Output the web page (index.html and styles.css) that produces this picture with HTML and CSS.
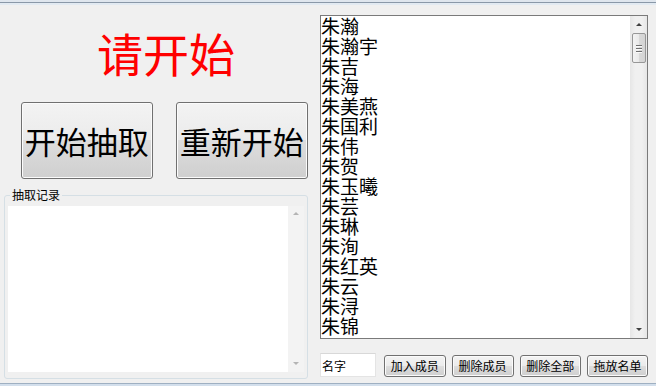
FILE: index.html
```html
<!DOCTYPE html>
<html lang="zh">
<head>
<meta charset="utf-8">
<title>抽取</title>
<link rel="stylesheet" href="styles.css">
</head>
<body>
<div class="topbar"></div>
<div class="main">
  <div class="left">
    <div class="title">请开始</div>
    <div class="btns">
      <button class="big">开始抽取</button>
      <button class="big">重新开始</button>
    </div>
    <fieldset class="group">
      <legend>抽取记录</legend>
      <div class="log">
        <div class="log-area"></div>
        <div class="vscroll off">
          <span class="arr up"></span>
          <span class="arr down"></span>
        </div>
      </div>
    </fieldset>
  </div>
  <div class="right">
    <div class="listbox">
      <ul class="items">
        <li>朱瀚</li>
        <li>朱瀚宇</li>
        <li>朱吉</li>
        <li>朱海</li>
        <li>朱美燕</li>
        <li>朱国利</li>
        <li>朱伟</li>
        <li>朱贺</li>
        <li>朱玉曦</li>
        <li>朱芸</li>
        <li>朱琳</li>
        <li>朱洵</li>
        <li>朱红英</li>
        <li>朱云</li>
        <li>朱浔</li>
        <li>朱锦</li>
      </ul>
      <div class="vscroll">
        <span class="arr up"></span>
        <span class="thumb"><i></i><i></i><i></i></span>
        <span class="track"></span>
        <span class="arr down"></span>
      </div>
    </div>
    <div class="controls">
      <input class="name" type="text" value="名字">
      <button class="small">加入成员</button>
      <button class="small">删除成员</button>
      <button class="small">删除全部</button>
      <button class="small">拖放名单</button>
    </div>
  </div>
</div>
<div class="bottombar"></div>
</body>
</html>
```
FILE: styles.css
```css
* { box-sizing: border-box; }
html, body {
  margin: 0;
  padding: 0;
}
body {
  width: 656px;
  height: 386px;
  overflow: hidden;
  background: #f0f0f0;
  font-family: "Noto Sans CJK SC", "Noto Sans", sans-serif;
  color: #000;
}
.topbar {
  height: 5px;
  background: linear-gradient(#dfe6ee 0 2px, #8a98a8 2px 3px, #e2eaf2 3px 5px);
}
.bottombar {
  height: 3px;
  background: linear-gradient(#9fb0c2 0 1px, #d3dfec 1px 3px);
}
.main {
  display: flex;
  height: 378px;
}
.left {
  width: 304px;
  margin-left: 4px;
  display: flex;
  flex-direction: column;
}
.title {
  margin-top: 24px;
  height: 46px;
  font-size: 46px;
  line-height: 46px;
  color: #f00;
  text-align: center;
  padding-left: 20px;
}
.btns {
  display: flex;
  gap: 23px;
  margin-top: 27px;
  padding-left: 17px;
}
button {
  font-family: "Noto Sans CJK SC", "Noto Sans", sans-serif;
  color: #000;
  padding: 0;
  border: 1px solid #707070;
  border-radius: 3px;
  background: linear-gradient(#f3f3f3 0%, #ebebeb 49%, #dddddd 50%, #cfcfcf 100%);
  box-shadow: inset 0 0 0 1px #fbfbfb;
}
.big {
  width: 133px;
  height: 77px;
  font-size: 31px;
  line-height: 1;
}
.big + .big { width: 134px; }
.group {
  margin: 9px 0 0 0;
  height: 191px;
  width: 304px;
  border: 1px solid #d5dfe5;
  border-radius: 3px;
  padding: 4px 3px 6px 3px;
}
.group legend {
  font-size: 12px;
  line-height: 14px;
  height: 14px;
  padding: 0 2px;
  margin-left: 2px;
}
.log {
  display: flex;
  height: 166px;
}
.log-area {
  flex: 1;
  background: #fff;
}
.vscroll {
  width: 17px;
  display: flex;
  flex-direction: column;
  align-items: center;
  background: linear-gradient(90deg, #e6e6e6, #f0f0f0 30%, #f0f0f0 70%, #e6e6e6);
}
.vscroll.off {
  width: 16px;
  justify-content: space-between;
  background: #f3f3f3;
  padding: 6px 0 7px;
}
.arr {
  width: 0;
  height: 0;
  border-left: 3px solid transparent;
  border-right: 3px solid transparent;
}
.arr.up { border-bottom: 3px solid #404040; }
.arr.down { border-top: 3px solid #404040; }
.off .arr.up { border-bottom-color: #b4b4b4; }
.off .arr.down { border-top-color: #b4b4b4; }
.right {
  margin-left: 12px;
  width: 328px;
  padding-top: 10px;
  display: flex;
  flex-direction: column;
}
.listbox {
  height: 324px;
  border: 1px solid #7a7a7a;
  background: #fff;
  display: flex;
}
.items {
  flex: 1;
  list-style: none;
  margin: 0;
  padding: 0;
  font-size: 19px;
  line-height: 20px;
  overflow: hidden;
}
.items li {
  height: 20px;
  white-space: nowrap;
}
.listbox .vscroll {
  padding: 0 1px;
}
.listbox .arr.up { margin-top: 7px; margin-bottom: 7px; }
.listbox .arr.down { margin-bottom: 7px; margin-top: 7px; }
.thumb {
  width: 14px;
  height: 30px;
  margin-left: 1px;
  border: 1px solid #979797;
  border-radius: 2px;
  background: linear-gradient(90deg, #f3f3f3, #e9e9e9 50%, #d9d9d9 51%, #d4d4d4);
  display: flex;
  flex-direction: column;
  align-items: center;
  justify-content: center;
  gap: 2px;
}
.thumb i {
  display: block;
  width: 6px;
  height: 1px;
  background: #6f6f6f;
  box-shadow: 0 1px 0 #fafafa;
}
.track { flex: 1; }
.controls {
  margin-top: 14px;
  display: flex;
  align-items: flex-end;
  gap: 6px;
}
.name {
  width: 56px;
  height: 24px;
  margin: 0 2px 0 0;
  border: 1px solid #e4e4e4;
  border-top-color: #d8d8d8;
  background: #fff;
  font-family: "Noto Sans CJK SC", "Noto Sans", sans-serif;
  font-size: 12px;
  padding: 0 0 0 1px;
  outline: none;
}
.small {
  width: 62px;
  height: 22px;
  font-size: 12px;
  line-height: 1;
}
.small:last-child { width: 61px; }
```
